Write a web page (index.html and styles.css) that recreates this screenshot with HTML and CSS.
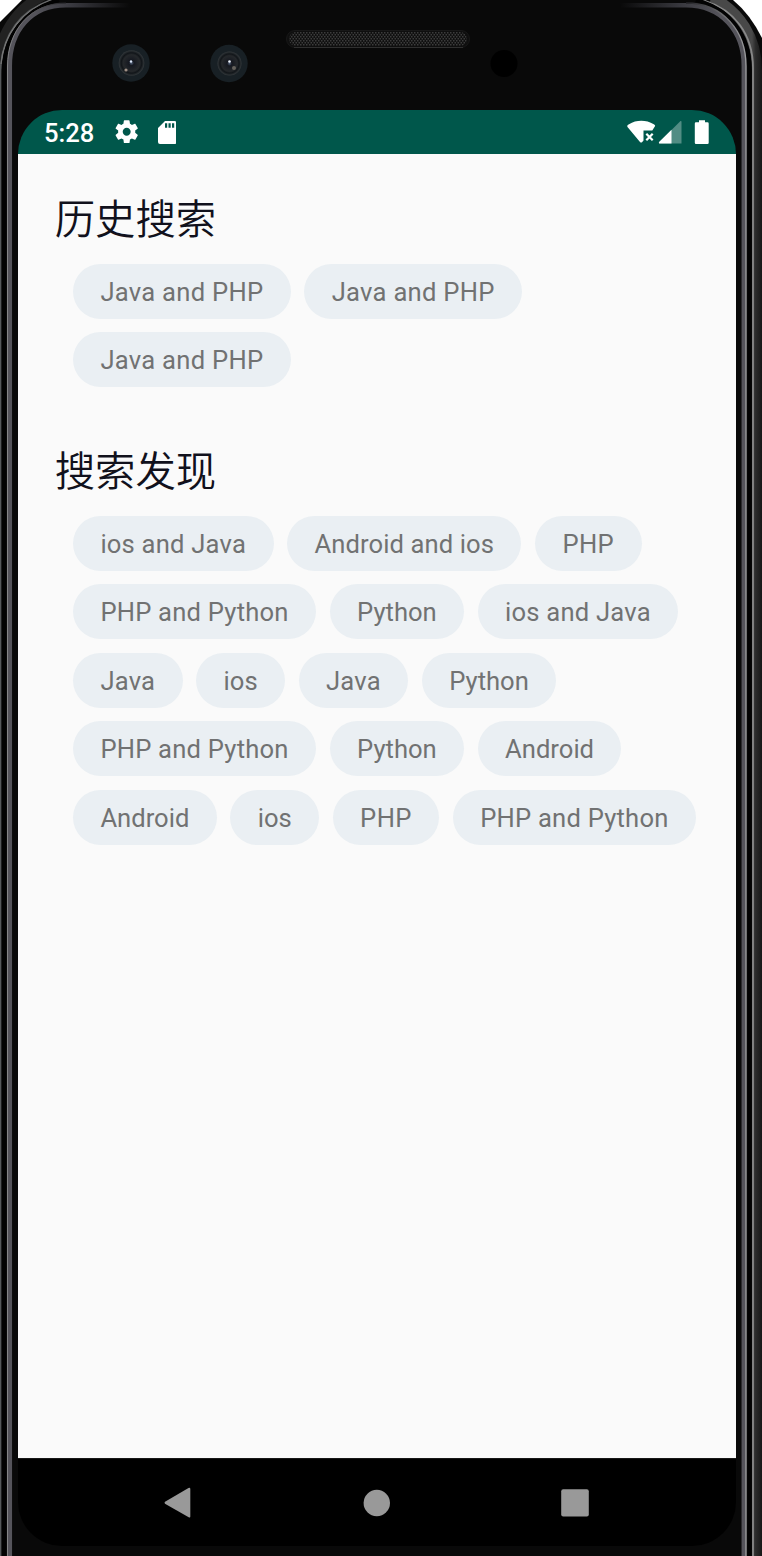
FILE: index.html
```html
<!DOCTYPE html>
<html lang="zh-CN">
<head>
<meta charset="utf-8">
<title>历史搜索</title>
<link rel="stylesheet" href="styles.css">
</head>
<body>
<div class="phone">
  <svg class="frame" viewBox="0 0 762 1556" fill="none">
    <defs>
      <linearGradient id="fadeL" gradientUnits="userSpaceOnUse" x1="35" y1="0" x2="130" y2="0"><stop stop-color="#55545b"/><stop offset=".4" stop-color="#38383e"/><stop offset="1" stop-color="#090909"/></linearGradient>
      <linearGradient id="fadeR" gradientUnits="userSpaceOnUse" x1="620" y1="0" x2="720" y2="0"><stop stop-color="#090909"/><stop offset=".6" stop-color="#38383e"/><stop offset="1" stop-color="#55545b"/></linearGradient>
      <linearGradient id="shineL" gradientUnits="userSpaceOnUse" x1="8" y1="0" x2="66" y2="0"><stop stop-color="#858587"/><stop offset="1" stop-color="#222226"/></linearGradient>
      <linearGradient id="shineR" gradientUnits="userSpaceOnUse" x1="686" y1="0" x2="746" y2="0"><stop stop-color="#222226"/><stop offset="1" stop-color="#9a9a9c"/></linearGradient>
      <linearGradient id="edgeR" gradientUnits="userSpaceOnUse" x1="752" y1="0" x2="762" y2="0"><stop stop-color="#484848"/><stop offset=".35" stop-color="#2c2c2c"/><stop offset="1" stop-color="#171717"/></linearGradient>
      <pattern id="mesh" width="3" height="4" patternUnits="userSpaceOnUse"><rect width="3" height="4" fill="#101010"/><rect width="1.5" height="1.5" fill="#3c3c3c"/><rect x="1.5" y="2" width="1.5" height="1.5" fill="#3c3c3c"/></pattern>
      <radialGradient id="lens"><stop stop-color="#526078"/><stop offset=".2" stop-color="#151820"/><stop offset=".65" stop-color="#25282b"/><stop offset=".8" stop-color="#111519"/><stop offset="1" stop-color="#33383b"/></radialGradient>
      <clipPath id="body"><path d="M0 1556V22L22 0H733Q750 14 762 38V1556Z"/></clipPath>
    </defs>
    <g clip-path="url(#body)">
      <rect width="762" height="1556" fill="#090909"/>
      <path d="M-4 75C-3 38 15 7 47-6" stroke="#222" stroke-width="10"/>
      <path d="M.5 1556V70C2 35 20 9 54-1" stroke="#55585a" stroke-width="1.6"/>
      <path d="M1 64C4 34 22 10 52 0" stroke="#757575" stroke-width="1.3"/>
      <path d="M4 1556V68C5 36 25 9 59 0" stroke="#020202" stroke-width="4"/>
      <path d="M9.8 1556V66C9.800 31 31 5.300 66 5.300H135" stroke="url(#fadeL)" stroke-width="4.500"/>
      <path d="M7.500 1556V66C7.500 31 30 3 66 3" stroke="url(#shineL)"/>
      <path d="M757 1556V70C757 38 740 11 712-3" stroke="url(#edgeR)" stroke-width="10"/>
      <path d="M753 1556V68C753 35 735 9 702 0" stroke="#888" stroke-width="1.800"/>
      <path d="M749.500 1556V68C749.500 35 730 9 696 0" stroke="#020202" stroke-width="4"/>
      <path d="M743.800 1556V66C743.800 31 721 5.300 686 5.300H620" stroke="url(#fadeR)" stroke-width="4.500"/>
      <path d="M746 1556V66C746 31 723 3 686 3" stroke="url(#shineR)" stroke-width="1.400"/>
    </g>
    <rect x="286.500" y="30.500" width="183" height="17" rx="8.500" fill="#0f0f0f" stroke="#181818"/>
    <rect x="289" y="32" width="178" height="14" rx="7" fill="url(#mesh)"/>
    <path d="M294 47.500H463" stroke="#303030"/>
    <circle cx="131" cy="63" r="18.700" fill="#182025"/><circle cx="131.500" cy="63" r="12.800" fill="url(#lens)"/><circle cx="131" cy="61.500" r="1.200" fill="#dce7fa"/><circle cx="126" cy="70" r="1.600" fill="#a09086"/>
    <circle cx="229" cy="63.500" r="18.700" fill="#182025"/><circle cx="229.500" cy="63.500" r="12" fill="url(#lens)"/><circle cx="229.500" cy="61.500" r="1.300" fill="#eef4ff"/><circle cx="234" cy="68" r="2" fill="#66625d"/>
    <circle cx="504" cy="63.500" r="13.500" fill="#000"/>
  </svg>
  <main class="screen">
    <header class="status">
      <span class="time">5:28</span>
      <svg class="gear" viewBox="0 0 24 24"><path d="M19.430 12.980c.04-.32.07-.64.07-.98s-.03-.66-.07-.98l2.110-1.650c.19-.15.24-.42.12-.64l-2-3.460c-.12-.22-.39-.3-.61-.22l-2.490 1c-.52-.4-1.080-.73-1.690-.98l-.38-2.650C14.460 2.180 14.250 2 14 2h-4c-.25 0-.46.18-.49.42l-.38 2.650c-.61.25-1.170.59-1.690.98l-2.490-1c-.23-.09-.49 0-.61.22l-2 3.460c-.13.22-.07.49.12.64l2.110 1.650c-.04.32-.07.65-.07.98s.03.66.07.98l-2.110 1.650c-.19.15-.24.42-.12.64l2 3.460c.12.22.39.3.61.22l2.490-1c.52.4 1.080.73 1.690.98l.38 2.650c.03.24.24.42.49.42h4c.25 0 .46-.18.49-.42l.38-2.650c.61-.25 1.170-.59 1.690-.98l2.490 1c.23.09.49 0 .61-.22l2-3.460c.12-.22.07-.49-.12-.64l-2.110-1.650zM12 15.500c-1.930 0-3.500-1.570-3.500-3.500s1.570-3.500 3.500-3.500 3.500 1.570 3.500 3.500-1.570 3.500-3.500 3.500z"/></svg>
      <svg class="card" viewBox="0 0 18.5 23"><path fill-rule="evenodd" d="M7 0H16.500Q18.500 0 18.500 2V21Q18.500 23 16.500 23H2Q0 23 0 21V7ZM7 2.300V6.800H9.200V2.300ZM10.500 2.300V6.800H12.700V2.300ZM14 2.300V6.800H16.200V2.300Z"/></svg>
      <svg class="signals" viewBox="0 0 84 26">
        <path d="M.2 5.900Q.4 5 2 4.200C9.500-.4 19-.4 26.800 4.200Q28.300 5 28.100 6L25.300 10.500H16.500V20.500L15 22.300Q14 23 13 22L.5 7Z"/>
        <path d="M19.300 13.700L25.700 20.300M25.700 13.700L19.300 20.300" stroke="#fff" stroke-width="2.200"/>
        <path d="M32 23.500V22.500L53.500 1Q54.500.5 54.500 2V23.500Z" opacity=".32"/>
        <path d="M32.300 23.500Q31.300 22.700 32.300 21.800L44.500 9.700V23.500Z"/>
        <path d="M72 .3H78V2.200H80.500Q81.700 2.200 81.700 3.400V22.800Q81.700 24 80.500 24H69Q67.800 24 67.800 22.800V3.400Q67.800 2.200 69 2.200H72Z"/>
      </svg>
    </header>
    <section class="content">
      <h2 class="title">历史搜索</h2>
      <div class="chips">
        <div class="row"><span class="chip mid">Java and PHP</span><span class="chip mid">Java and PHP</span></div>
        <div class="row"><span class="chip mid">Java and PHP</span></div>
      </div>
      <h2 class="title">搜索发现</h2>
      <div class="chips">
        <div class="row"><span class="chip soft">ios and Java</span><span class="chip slight">Android and ios</span><span class="chip wide">PHP</span></div>
        <div class="row"><span class="chip soft">PHP and Python</span><span class="chip">Python</span><span class="chip soft">ios and Java</span></div>
        <div class="row"><span class="chip soft">Java</span><span class="chip">ios</span><span class="chip soft">Java</span><span class="chip">Python</span></div>
        <div class="row"><span class="chip soft">PHP and Python</span><span class="chip">Python</span><span class="chip">Android</span></div>
        <div class="row"><span class="chip">Android</span><span class="chip">ios</span><span class="chip wide">PHP</span><span class="chip soft">PHP and Python</span></div>
      </div>
    </section>
    <nav class="nav">
      <svg viewBox="0 0 28 32"><path d="M1 14.700L24.500 1Q26.300.4 26.300 2V29.500Q26.300 31 24.700 30.300L1 16.800Q0 15.800 1 14.700Z"/></svg>
      <svg viewBox="0 0 28 32"><circle cx="14.800" cy="16" r="13.200"/></svg>
      <svg viewBox="0 0 28 32"><rect x=".2" y="2.200" width="27.600" height="27.200" rx="2"/></svg>
    </nav>
  </main>
</div>
</body>
</html>
```
FILE: styles.css
```css
* { box-sizing: border-box; }
body { margin: 0; background: #fff; overflow: hidden; }
.phone { position: relative; width: 762px; height: 1556px; padding: 110px 26px 10px 18px; }
.frame { position: absolute; top: 0; left: 0; width: 762px; height: 1556px; }
.screen { position: relative; display: flex; flex-direction: column; height: 1436px; }
.status { display: flex; align-items: flex-start; flex: none; height: 44px; padding: 8px 26px 0; border-radius: 44px 44px 0 0; background: #00574b; color: #fff; fill: #fff; }
.time { width: 51px; margin-top: 1px; font: 500 25.6px/28px Roboto, sans-serif; white-space: nowrap; }
.gear { width: 27.4px; height: 27.4px; margin: 0 0 0 18px; }
.card { width: 18.5px; height: 23px; margin: 3px 0 0 17.4px; }
.signals { width: 84px; height: 26px; margin: 2px -1.4px 0 auto; }
.content { flex: 1; padding: 37.5px 0 0 36.7px; background: #fafafa; }
.title { height: 72px; margin: 0; color: #11111c; font: 350 40.4px/50px "Noto Sans CJK SC", sans-serif; }
.chips { display: flex; flex-direction: column; gap: 13.5px; height: 180px; padding-left: 18.3px; }
.row { display: flex; gap: 13.6px; }
.chip { flex: none; height: 55px; padding: 0 27.4px; border-radius: 27.5px; background: #eaeff3; color: #717272; font: 400 25.6px/57px Roboto, sans-serif; white-space: nowrap; }
.slight { letter-spacing: .09px; }
.soft { letter-spacing: .21px; }
.mid { letter-spacing: .27px; }
.wide { letter-spacing: .4px; }
.nav { display: flex; align-items: center; justify-content: center; gap: 170.5px; flex: none; height: 88px; padding-right: 1.6px; border-top: 1px solid #181818; border-radius: 0 0 44px 44px; background: #000; fill: #999; }
.nav svg { width: 28px; height: 32px; }
```
